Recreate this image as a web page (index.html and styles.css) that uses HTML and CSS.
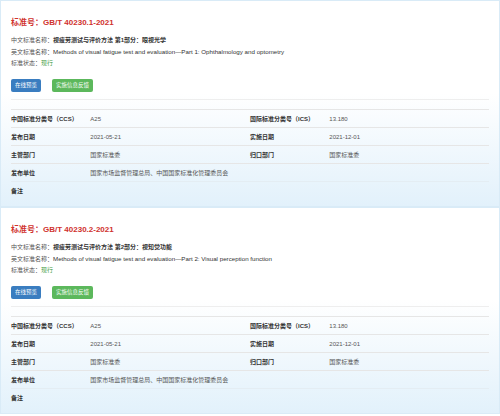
FILE: index.html
```html
<!DOCTYPE html>
<html lang="zh-CN">
<head>
    <meta charset="UTF-8">
    <meta name="viewport" content="width=device-width, initial-scale=1.0">
    <title>标准详情</title>
    <link rel="stylesheet" href="styles.css">
</head>
<body>
    <div class="std-card">
        <h1 class="std-no">标准号：GB/T 40230.1-2021</h1>
        <div class="info-line">中文标准名称：<strong>视疲劳测试与评价方法 第1部分：眼视光学</strong></div>
        <div class="info-line">英文标准名称：<span class="en">Methods of visual fatigue test and evaluation—Part 1: Ophthalmology and optometry</span></div>
        <div class="info-line">标准状态：<span class="state">现行</span></div>
        <div class="btns">
            <a class="btn btn-blue">在线预览</a>
            <a class="btn btn-green">实施信息反馈</a>
        </div>
        <table class="detail">
            <colgroup><col class="c-label"><col class="c-value"><col class="c-label"><col class="c-value"></colgroup>
            <tr>
                <th>中国标准分类号（CCS）</th><td>A25</td>
                <th>国际标准分类号（ICS）</th><td>13.180</td>
            </tr>
            <tr>
                <th>发布日期</th><td>2021-05-21</td>
                <th>实施日期</th><td>2021-12-01</td>
            </tr>
            <tr>
                <th>主管部门</th><td>国家标准委</td>
                <th>归口部门</th><td>国家标准委</td>
            </tr>
            <tr class="no-line">
                <th>发布单位</th><td colspan="3">国家市场监督管理总局、中国国家标准化管理委员会</td>
            </tr>
            <tr class="no-line">
                <th>备注</th><td colspan="3"></td>
            </tr>
        </table>
    </div>

    <div class="std-card">
        <h1 class="std-no">标准号：GB/T 40230.2-2021</h1>
        <div class="info-line">中文标准名称：<strong>视疲劳测试与评价方法 第2部分：视知觉功能</strong></div>
        <div class="info-line">英文标准名称：<span class="en">Methods of visual fatigue test and evaluation—Part 2: Visual perception function</span></div>
        <div class="info-line">标准状态：<span class="state">现行</span></div>
        <div class="btns">
            <a class="btn btn-blue">在线预览</a>
            <a class="btn btn-green">实施信息反馈</a>
        </div>
        <table class="detail">
            <colgroup><col class="c-label"><col class="c-value"><col class="c-label"><col class="c-value"></colgroup>
            <tr>
                <th>中国标准分类号（CCS）</th><td>A25</td>
                <th>国际标准分类号（ICS）</th><td>13.180</td>
            </tr>
            <tr>
                <th>发布日期</th><td>2021-05-21</td>
                <th>实施日期</th><td>2021-12-01</td>
            </tr>
            <tr>
                <th>主管部门</th><td>国家标准委</td>
                <th>归口部门</th><td>国家标准委</td>
            </tr>
            <tr class="no-line">
                <th>发布单位</th><td colspan="3">国家市场监督管理总局、中国国家标准化管理委员会</td>
            </tr>
            <tr class="no-line">
                <th>备注</th><td colspan="3"></td>
            </tr>
        </table>
    </div>
</body>
</html>
```

FILE: styles.css
```css
body {
    margin: 0;
    background: #fff;
    font-family: "Liberation Sans", "Noto Sans CJK SC", sans-serif;
    color: #333;
}
.std-card {
    box-sizing: border-box;
    width: 500px;
    height: 207px;
    padding: 15px 10px 0;
    border: 1px solid #d9ebf7;
    background: linear-gradient(to bottom, #fff 45%, #e2f1fb 100%);
}
.std-no {
    margin: 0;
    font-size: 8px;
    line-height: 14px;
    font-weight: bold;
    color: #d0312d;
}
.std-no + .info-line {
    margin-top: 5px;
}
.info-line {
    font-size: 6px;
    line-height: 11px;
    color: #555;
    white-space: nowrap;
}
.info-line strong {
    color: #333;
}
.info-line .en {
    font-size: 6.2px;
    color: #333;
}
.state {
    color: #3c9a3c;
}
.btns {
    display: flex;
    gap: 11px;
    margin-top: 10px;
    padding-bottom: 7px;
    border-bottom: 1px solid #eee;
}
.btn {
    display: block;
    height: 13px;
    line-height: 13px;
    padding: 0 4px;
    border-radius: 2px;
    font-size: 5.5px;
    color: #fff;
}
.btn-blue {
    background: #3a7dc0;
}
.btn-green {
    background: #5cb85c;
}
.detail {
    width: 100%;
    margin-top: 9px;
    table-layout: fixed;
    border-collapse: collapse;
    font-size: 6px;
}
.c-label { width: 16.6%; }
.c-value { width: 33.4%; }
.detail tr {
    height: 18px;
    border-top: 1px solid #e6e6e6;
}
.detail tr.no-line + tr.no-line {
    border-top-color: #e4edf3;
}
.detail th {
    padding: 0;
    text-align: left;
    font-weight: bold;
    color: #333;
    white-space: nowrap;
}
.detail td {
    padding: 0;
    color: #555;
}
```
